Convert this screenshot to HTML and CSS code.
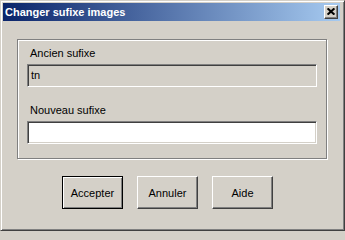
FILE: index.html
```html
<!DOCTYPE html>
<html lang="fr">
<head>
<meta charset="utf-8">
<title>Changer sufixe images</title>
<link rel="stylesheet" href="styles.css">
</head>
<body>
<div class="window">
  <div class="titlebar">
    <span class="title">Changer sufixe images</span>
    <button class="close" type="button" aria-label="Fermer">
      <svg width="8" height="7" viewBox="0 0 8 7"><path d="M0.6 0.4 L7.4 6.6 M7.4 0.4 L0.6 6.6" stroke="#000" stroke-width="2" fill="none"/></svg>
    </button>
  </div>
  <div class="content">
    <div class="group">
      <div class="label">Ancien sufixe</div>
      <div class="field disabled">tn</div>
      <div class="label second">Nouveau sufixe</div>
      <div class="field"></div>
    </div>
    <div class="buttons">
      <button class="btn default" type="button">Accepter</button>
      <button class="btn" type="button">Annuler</button>
      <button class="btn" type="button">Aide</button>
    </div>
  </div>
</div>
</body>
</html>
```

FILE: styles.css
```css
html, body {
  margin: 0;
  padding: 0;
  background: #d4d0c8;
}

.window {
  width: 345px;
  height: 231px;
  box-sizing: border-box;
  background: #d4d0c8;
  border: 1px solid;
  border-color: #d4d0c8 #404040 #404040 #d4d0c8;
  box-shadow: inset 1px 1px 0 #ffffff, inset -1px -1px 0 #808080;
  padding: 2px 4px 2px 2px;
  display: flex;
  flex-direction: column;
  font-family: "Liberation Sans", Arial, sans-serif;
  font-size: 11px;
  color: #000;
}

.titlebar {
  height: 18px;
  flex: none;
  background: linear-gradient(90deg, #0a246a 0%, #a6caf0 100%);
  display: flex;
  align-items: center;
  justify-content: space-between;
}

.title {
  color: #ffffff;
  font-weight: bold;
  font-size: 11px;
  line-height: 13px;
  padding-left: 2px;
  white-space: nowrap;
}

.close {
  width: 14px;
  height: 14px;
  margin: 0 2px 0 0;
  padding: 0;
  box-sizing: border-box;
  background: #d4d0c8;
  border: 1px solid;
  border-color: #ffffff #404040 #404040 #ffffff;
  box-shadow: inset -1px -1px 0 #808080;
  display: flex;
  align-items: center;
  justify-content: center;
}

.close svg {
  display: block;
  margin: 0 1px 1px 0;
}

.content {
  display: flex;
  flex-direction: column;
}

.group {
  margin: 18px 0 0 14px;
  width: 310px;
  height: 120px;
  box-sizing: border-box;
  border: 1px solid #808080;
  box-shadow: 1px 1px 0 #ffffff, inset 1px 1px 0 #ffffff;
  padding: 7px 9px 0 9px;
  display: flex;
  flex-direction: column;
}

.label {
  line-height: 13px;
  height: 13px;
  padding-left: 3px;
  white-space: nowrap;
}

.label.second {
  margin-top: 17px;
}

.field {
  margin-top: 4px;
  width: 290px;
  height: 23px;
  box-sizing: border-box;
  background: #ffffff;
  border: 1px solid;
  border-color: #808080 #ffffff #ffffff #808080;
  box-shadow: inset 1px 1px 0 #404040, inset -1px -1px 0 #d4d0c8;
  padding: 0 3px;
  line-height: 21px;
}

.field.disabled {
  background: #d4d0c8;
}

.buttons {
  display: flex;
  gap: 14px;
  margin: 17px 0 0 59px;
}

.btn {
  width: 61px;
  height: 33px;
  box-sizing: border-box;
  margin: 0;
  padding: 0;
  background: #d4d0c8;
  font-family: "Liberation Sans", Arial, sans-serif;
  font-size: 11px;
  color: #000;
  border: 1px solid;
  border-color: #ffffff #404040 #404040 #ffffff;
  box-shadow: inset -1px -1px 0 #808080;
}

.btn.default {
  border-color: #000000;
  box-shadow: inset 1px 1px 0 #ffffff, inset -1px -1px 0 #808080;
}
```
